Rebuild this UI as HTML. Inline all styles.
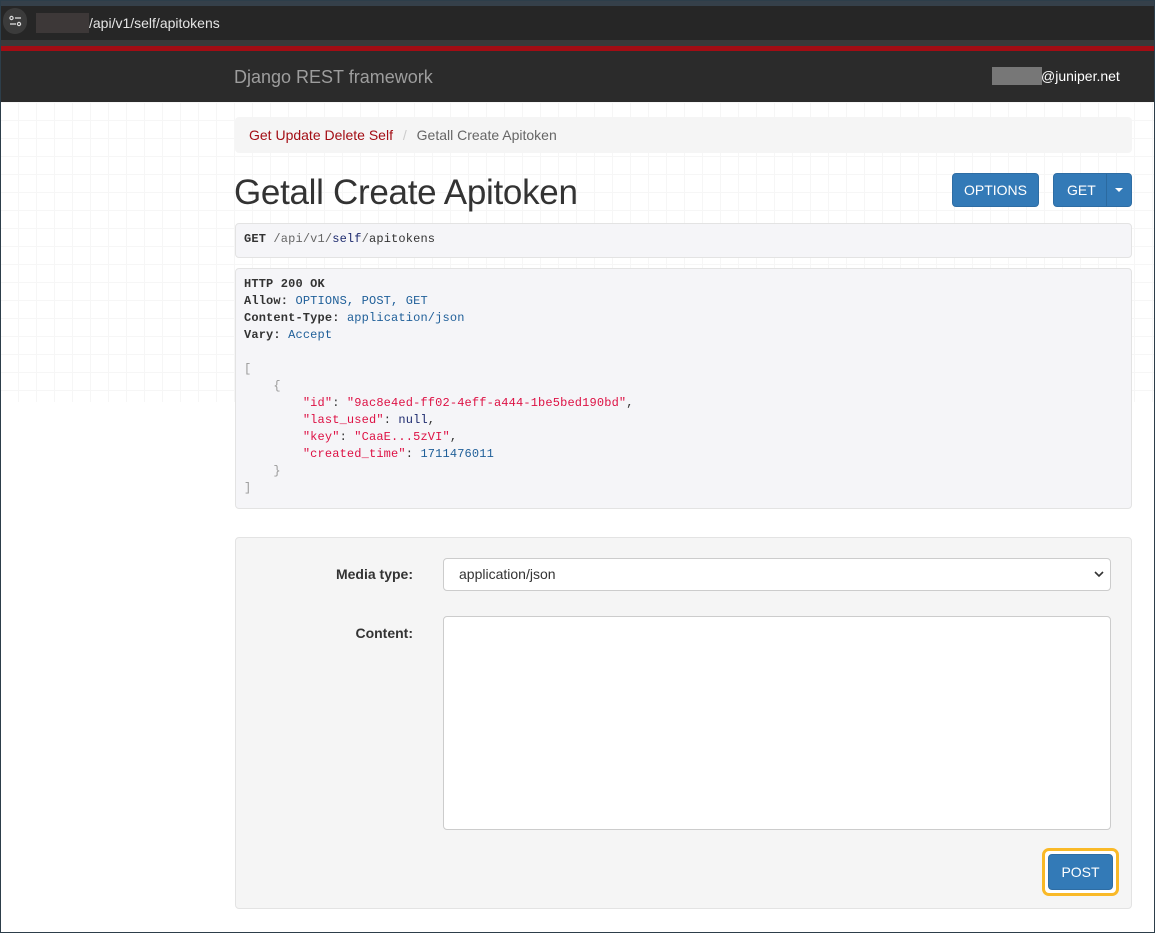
<!DOCTYPE html>
<html><head><meta charset="utf-8"><style>
*{box-sizing:border-box;margin:0;padding:0}
body{width:1155px;height:933px;overflow:hidden;font-family:"Liberation Sans",sans-serif;background:#fff;position:relative}
.a{position:absolute}
.grid{left:0;top:102px;width:1155px;height:300px;background-image:linear-gradient(#f6f6f6 1px,transparent 1px),linear-gradient(90deg,#f6f6f6 1px,transparent 1px);background-size:18px 18px}
.mono{font-family:"Liberation Mono",monospace;font-size:12px;letter-spacing:0.15px;line-height:17px;white-space:pre;color:#333}
.btn{background:#337ab7;color:#fff;border-radius:4px;font-size:14px;text-align:center;border:1px solid #2e6da4}
.s{color:#dd1144}.n{color:#1f5f99}.k{color:#333}.p{color:#999}.b{font-weight:bold}
</style></head><body>
<div class="a" style="left:0;top:0;width:1155px;height:42px;background:#262626"></div>
<div class="a" style="left:0;top:0;width:1155px;height:6px;background:#35404a"></div>
<div class="a" style="left:3px;top:8px;width:24px;height:26px;border-radius:13px;background:#3b3b3b"></div>
<svg class="a" style="left:9px;top:15px" width="13" height="12" viewBox="0 0 13 12"><circle cx="2.5" cy="3" r="1.6" fill="none" stroke="#ddd" stroke-width="1.2"/><line x1="6" y1="3" x2="12" y2="3" stroke="#ddd" stroke-width="1.3"/><line x1="1" y1="9" x2="7" y2="9" stroke="#ddd" stroke-width="1.3"/><circle cx="10" cy="9" r="1.6" fill="none" stroke="#ddd" stroke-width="1.2"/></svg>
<div class="a" style="left:36px;top:13px;width:53px;height:20px;background:#3d3838"></div>
<div class="a" style="left:89px;top:15px;color:#e5e5e5;font-size:14px">/api/v1/self/apitokens</div>
<div class="a" style="left:0;top:40px;width:1155px;height:6px;background:#3a3a3a"></div>
<div class="a" style="left:0;top:46px;width:1155px;height:5px;background:#a30d14"></div>
<div class="a" style="left:0;top:51px;width:1155px;height:51px;background:#2b2b2b"></div>
<div class="a" style="left:234px;top:67px;color:#9d9d9d;font-size:18px">Django REST framework</div>
<div class="a" style="left:992px;top:67px;width:50px;height:18px;background:#777"></div>
<div class="a" style="left:1041px;top:68px;color:#fff;font-size:14px">@juniper.net</div>
<div class="a grid"></div>
<div class="a" style="left:235px;top:117px;width:897px;height:36px;background:#f5f5f5;border-radius:4px"></div>
<div class="a" style="left:249px;top:127px;font-size:14px;color:#a30d14">Get Update Delete Self <span style="color:#ccc;padding:0 6px">/</span> <span style="color:#666">Getall Create Apitoken</span></div>
<div class="a" style="left:234px;top:173px;font-size:35px;color:#333;letter-spacing:-0.3px">Getall Create Apitoken</div>
<div class="a btn" style="left:952px;top:173px;width:87px;height:34px;line-height:32px">OPTIONS</div>
<div class="a btn" style="left:1053px;top:173px;width:79px;height:34px;line-height:32px;text-align:left;padding-left:13px">GET</div>
<div class="a" style="left:1106px;top:174px;width:1px;height:32px;background:#2b6aa0"></div>
<div class="a" style="left:1115px;top:188px;border-left:4px solid transparent;border-right:4px solid transparent;border-top:4px solid #fff"></div>
<div class="a" style="left:235px;top:223px;width:897px;height:35px;background:#f5f5f8;border:1px solid #e3e3e3;border-radius:4px"></div>
<div class="a mono" style="left:244px;top:231px"><b>GET</b> <span style="color:#666">/api/v1/</span><span style="color:#1d2a6e">self</span><span style="color:#666">/</span>apitokens</div>
<div class="a" style="left:235px;top:268px;width:897px;height:241px;background:#f5f5f8;border:1px solid #e3e3e3;border-radius:4px"></div>
<div class="a mono" style="left:244px;top:276px"><b>HTTP 200 OK</b>
<b>Allow:</b> <span class="n">OPTIONS, POST, GET</span>
<b>Content-Type:</b> <span class="n">application/json</span>
<b>Vary:</b> <span class="n">Accept</span>

<span class="p">[</span>
    <span class="p">{</span>
        <span class="s">"id"</span>: <span class="s">"9ac8e4ed-ff02-4eff-a444-1be5bed190bd"</span>,
        <span class="s">"last_used"</span>: <span style="color:#1d2a6e">null</span>,
        <span class="s">"key"</span>: <span class="s">"CaaE...5zVI"</span>,
        <span class="s">"created_time"</span>: <span class="n">1711476011</span>
    <span class="p">}</span>
<span class="p">]</span></div>
<div class="a" style="left:235px;top:537px;width:897px;height:372px;background:#f5f5f5;border:1px solid #e3e3e3;border-radius:4px"></div>
<div class="a" style="left:300px;top:566px;width:113px;text-align:right;font-size:14px;font-weight:bold;color:#333">Media type:</div>
<div class="a" style="left:443px;top:558px;width:668px;height:33px;background:#fff;border:1px solid #ccc;border-radius:4px;font-size:14px;color:#333;padding:7px 15px">application/json<svg style="position:absolute;right:6px;top:12px" width="10" height="7" viewBox="0 0 10 7"><path d="M1 1L5 5L9 1" fill="none" stroke="#333" stroke-width="1.6"/></svg></div>
<div class="a" style="left:300px;top:625px;width:113px;text-align:right;font-size:14px;font-weight:bold;color:#333">Content:</div>
<div class="a" style="left:443px;top:616px;width:668px;height:214px;background:#fff;border:1px solid #ccc;border-radius:4px"></div>
<div class="a" style="left:1042px;top:848px;width:77px;height:48px;border:3px solid #f9b928;border-radius:7px;background:#fff"></div>
<div class="a btn" style="left:1048px;top:854px;width:65px;height:36px;line-height:34px">POST</div>
<div class="a" style="left:0;top:0;width:1155px;height:933px;border:1px solid #2d3e4a;pointer-events:none"></div>
</body></html>
